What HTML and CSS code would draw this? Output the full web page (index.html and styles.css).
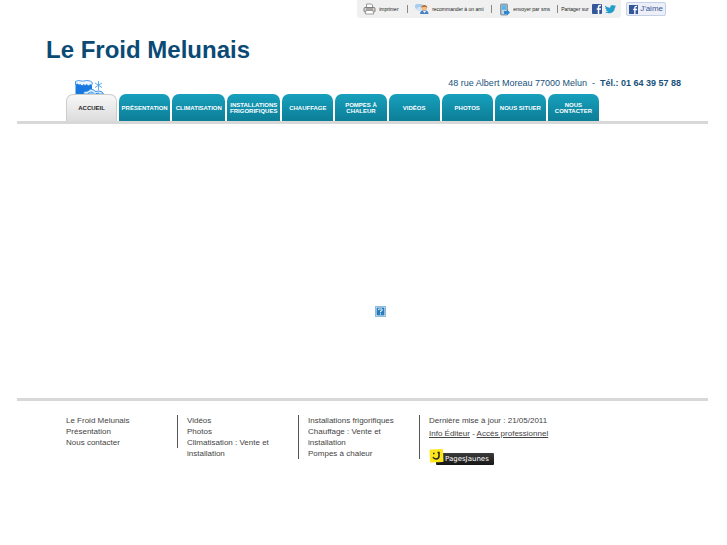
FILE: index.html
```
<!DOCTYPE html>
<html lang="fr">
<head>
    <meta charset="UTF-8">
    <meta name="viewport" content="width=device-width, initial-scale=1">
    <title>Le Froid Melunais</title>
    <link rel="stylesheet" href="styles.css">
</head>
<body>
<div id="page">

    <div id="topbar">
        <div class="tools">
            <a href="#" class="tool imprimer">
                <svg width="13" height="12" viewBox="0 0 13 12"><path d="M3.5 5V1h5l1 1v3" fill="#fff" stroke="#999"/><rect x="1" y="4.500" width="11" height="4.500" rx="1" fill="#d4d4d4" stroke="#808080"/><path d="M3 7.500h7l.7 3.500H2.300z" fill="#fff" stroke="#888" stroke-width=".8"/><path d="M3 6h7" stroke="#777"/></svg>
                imprimer
            </a>
            <a href="#" class="tool ami">
                <svg width="14" height="12" viewBox="0 0 14 12"><rect x="0" y="1" width="8" height="5" rx="2" fill="#a9cdec"/><path d="M2 5v3l3-2z" fill="#a9cdec"/><rect x="2" y="4" width="6" height="4" rx="2" fill="#cfe3f5"/><path d="M5 11c0-3 2-4 4-4s4.500 1 4.500 4z" fill="#4583c4"/><circle cx="9.300" cy="5" r="2.800" fill="#efbd8c"/><path d="M6.300 4.800C6.300 1 12.300 1 12.300 4.800 11 3.500 8 3.500 6.300 4.800z" fill="#b5682d"/><path d="M8 8l1.500 2L11 8z" fill="#fff"/></svg>
                recommander à un ami
            </a>
            <a href="#" class="tool sms">
                <svg width="11" height="13" viewBox="0 0 11 13"><rect x="1.500" y="1" width="7" height="11" rx="1" fill="#9eb6c8" stroke="#71899b" stroke-width=".8"/><rect x="3" y="2.500" width="4" height="4" fill="#59b5e8"/><path d="M3 8h4M3 10h3" stroke="#e9f1f6"/><path d="M5 8h3V6.500l3 3-3 3V11H5z" fill="#2b87d1"/></svg>
                envoyer par sms
            </a>
            <span class="tool partage">
                Partager sur
                <a href="#" aria-label="Facebook"><svg width="10" height="10" viewBox="0 0 10 10"><rect width="10" height="10" rx="1" fill="#34569a"/><path d="M9 1.500H8Q6.500 1.500 6.500 3v7M4.700 5H9" fill="none" stroke="#fff" stroke-width="1.500"/></svg></a>
                <a href="#" aria-label="Twitter"><svg width="11" height="10" viewBox="0 0 11 10"><path d="M0 1.500C1.500 3 3 3.600 5.200 3.700 5 1.500 7.500.2 9 1.700l1.700-.6-.8 1.500 1.100-.1-1.200 1.400C9.700 8 5.500 10.500 0 8.500c1.500 0 2.500-.3 3.200-.9C2 7.500 1.300 7 1 6h1C.9 5.600.3 4.800.3 3.800l1 .2C.2 3.300-.2 2.500 0 1.500z" fill="#249dcc"/></svg></a>
            </span>
        </div>
        <button type="button" class="jaime">
            <svg width="9" height="9" viewBox="0 0 10 10"><rect width="10" height="10" fill="#34569a"/><path d="M9 1.500H8Q6.500 1.500 6.500 3v7M4.700 5H9" fill="none" stroke="#fff" stroke-width="1.500"/></svg>
            J'aime
        </button>
    </div>

    <h1>Le Froid Melunais</h1>

    <div id="infos">
        <svg class="glace" width="30" height="14" viewBox="0 0 30 14">
            <path d="M.5 2H17v12H.5z" fill="#1778df"/>
            <path d="M.5 1.500l3-1 4 .7 4-.7 4 .5 2 2-1 2.500-1.500-1L13.500 6 12 4.500 10 5.500 8.500 4.500 7 6 5.500 4.500 4 5 2.500 4 .5 4.500z" fill="#eaf5ff" stroke="#2384e5" stroke-width=".8"/>
            <path d="M8 14l1.500-2.500 3.500-.5 2.500-2 3.500 1 1 1.500 4-.5 3 1 1.500 2z" fill="#e6f3ff" stroke="#2384e5" stroke-width=".9"/>
            <path d="M13 13.500l2.500-1.500 3 .5M21 13.500l3-.5" fill="none" stroke="#2384e5" stroke-width=".9"/>
            <path d="M23.500 1v9M20 3l7 4.500M27 3l-7 4.500" fill="none" stroke="#5aace9" stroke-width="1"/>
        </svg>
        <p class="adresse">48 rue Albert Moreau 77000 Melun &nbsp;-&nbsp; <strong>Tél.: 01 64 39 57 88</strong></p>
    </div>

    <nav id="menu">
        <a href="#" class="actif">Accueil</a>
        <a href="#">Présentation</a>
        <a href="#" class="large">Climatisation</a>
        <a href="#" class="large">Installations frigorifiques</a>
        <a href="#">Chauffage</a>
        <a href="#">Pompes à chaleur</a>
        <a href="#">Vidéos</a>
        <a href="#">Photos</a>
        <a href="#">Nous situer</a>
        <a href="#">Nous contacter</a>
    </nav>

    <main id="contenu">
        <svg width="11" height="11" viewBox="0 0 11 11"><rect x=".5" y=".5" width="10" height="10" fill="#fff" stroke="#8dbbdc"/><rect x="1.500" y="1.500" width="8" height="8" fill="#287cbd"/><path d="M3.500 4V3h3.500v2H5.500v1.300M5.500 7.200v1.300" fill="none" stroke="#e4f2fc"/></svg>
    </main>

    <footer id="pied">
        <ul>
            <li><a href="#">Le Froid Melunais</a></li>
            <li><a href="#">Présentation</a></li>
            <li><a href="#">Nous contacter</a></li>
        </ul>
        <ul class="court">
            <li><a href="#">Vidéos</a></li>
            <li><a href="#">Photos</a></li>
            <li><a href="#">Climatisation : Vente et installation</a></li>
        </ul>
        <ul>
            <li><a href="#">Installations frigorifiques</a></li>
            <li><a href="#">Chauffage : Vente et installation</a></li>
            <li><a href="#">Pompes à chaleur</a></li>
        </ul>
        <div class="editeur">
            <p>Dernière mise à jour : 21/05/2011</p>
            <p class="liens"><a href="#">Info Éditeur</a> - <a href="#">Accès professionnel</a></p>
            <a href="#" class="pj">
                <svg width="15" height="14" viewBox="0 0 15 14"><path d="M1.500.500L13 0q1 0 1 1l.5 11q0 1-1 1L2 13.500q-1 0-1-1L.5 1.500q0-1 1-1z" fill="#ffe51b"/><path d="M4 4.500h1.500M8.500 3.500H10V7q0 3-3 3Q5 10 4 8" fill="none" stroke="#222" stroke-width="1.500"/></svg>
                <span>PagesJaunes</span>
            </a>
        </div>
    </footer>

</div>
</body>
</html>
```
FILE: styles.css
```
body {
    margin: 0;
    background: #fff;
    color: #444;
    font-family: "Liberation Sans", Arial, Helvetica, sans-serif;
    font-size: 8px;
    line-height: 11px;
}

p, ul, h1 {
    margin: 0;
    padding: 0;
}

a {
    color: inherit;
    text-decoration: none;
}

svg {
    display: block;
    flex-shrink: 0;
}

#page {
    margin: 0 19px 0 17px;
}

/* barre du haut */
#topbar {
    display: flex;
    justify-content: flex-end;
    align-items: center;
    gap: 5px;
    padding-right: 42px;
}

.tools {
    display: flex;
    align-items: center;
    height: 18px;
    padding: 0 4px 0 6px;
    background: #f0f0f0;
    border-radius: 0 0 3px 3px;
    font-size: 5px;
    line-height: 8px;
    color: #222;
    white-space: nowrap;
}

.tool {
    display: flex;
    box-sizing: border-box;
    align-items: center;
    gap: 3px;
    height: 8px;
}

.tool + .tool {
    padding-left: 7px;
    border-left: 1px solid #888;
}

.imprimer {
    min-width: 44px;
}

.ami {
    min-width: 84px;
}

.sms {
    min-width: 66px;
}

.tools .partage {
    min-width: 60px;
    padding-left: 3px;
}

.jaime {
    display: flex;
    align-items: center;
    gap: 2px;
    height: 14px;
    padding: 0 2px;
    border: 1px solid #c5cfe5;
    border-radius: 2px;
    background: #eceff7;
    color: #3b5998;
    font-family: inherit;
    font-size: 8px;
    line-height: 10px;
}

h1 {
    padding: 17px 0 0 29px;
    color: #0a4a75;
    font-size: 24px;
    line-height: 30px;
}

#infos {
    display: flex;
    justify-content: space-between;
    align-items: flex-end;
    height: 29px;
    padding: 0 27px 0 58px;
}

.adresse {
    padding-bottom: 5px;
    color: #17517b;
    font-size: 9px;
}

/* onglets */
#menu {
    display: flex;
    gap: 2px;
    padding: 0 109px 0 49px;
    border-bottom: 3px solid #d8d8d8;
}

#menu a {
    display: flex;
    box-sizing: border-box;
    flex: 51 1 0;
    align-items: center;
    justify-content: center;
    min-width: 0;
    height: 27px;
    padding: 0 1px;
    border-radius: 7px 7px 0 0;
    background: linear-gradient(#17a0bd, #0d7e97);
    color: #fff;
    font-size: 6px;
    font-weight: bold;
    line-height: 6px;
    text-align: center;
    text-transform: uppercase;
}

#menu a.large {
    flex-grow: 53;
}

#menu a.actif {
    padding: 0;
    border: 1px solid #ccc;
    border-bottom: 0;
    background: linear-gradient(#f8f8f8, #dcdcdc);
    color: #222;
}

#contenu {
    display: flex;
    align-items: center;
    justify-content: center;
    height: 274px;
    padding: 101px 13px 0 49px;
    box-sizing: border-box;
}

/* pied de page */
#pied {
    display: flex;
    align-items: flex-start;
    padding: 14px 0 40px 49px;
    border-top: 3px solid #d8d8d8;
}

#pied ul {
    box-sizing: border-box;
    width: 111px;
    padding-right: 20px;
    list-style: none;
}

#pied ul + ul,
.editeur {
    padding-left: 9px;
    border-left: 1px solid #555;
}

#pied ul + ul {
    width: 121px;
}

#pied .court {
    height: 33px;
}

.editeur {
    height: 44px;
}

.liens {
    margin-top: 2px;
}

.liens a {
    text-decoration: underline;
}

.pj {
    display: flex;
    align-items: flex-end;
    width: 65px;
    margin-top: 10px;
}

.pj svg {
    position: relative;
    z-index: 1;
}

.pj span {
    flex: 1;
    margin: 0 0 -2px -8px;
    padding-left: 9px;
    border-radius: 1px;
    background: linear-gradient(#3c3c3c, #161616);
    color: #fff;
    font-family: "DejaVu Sans", Verdana, sans-serif;
    font-size: 7px;
    line-height: 12px;
}
```
